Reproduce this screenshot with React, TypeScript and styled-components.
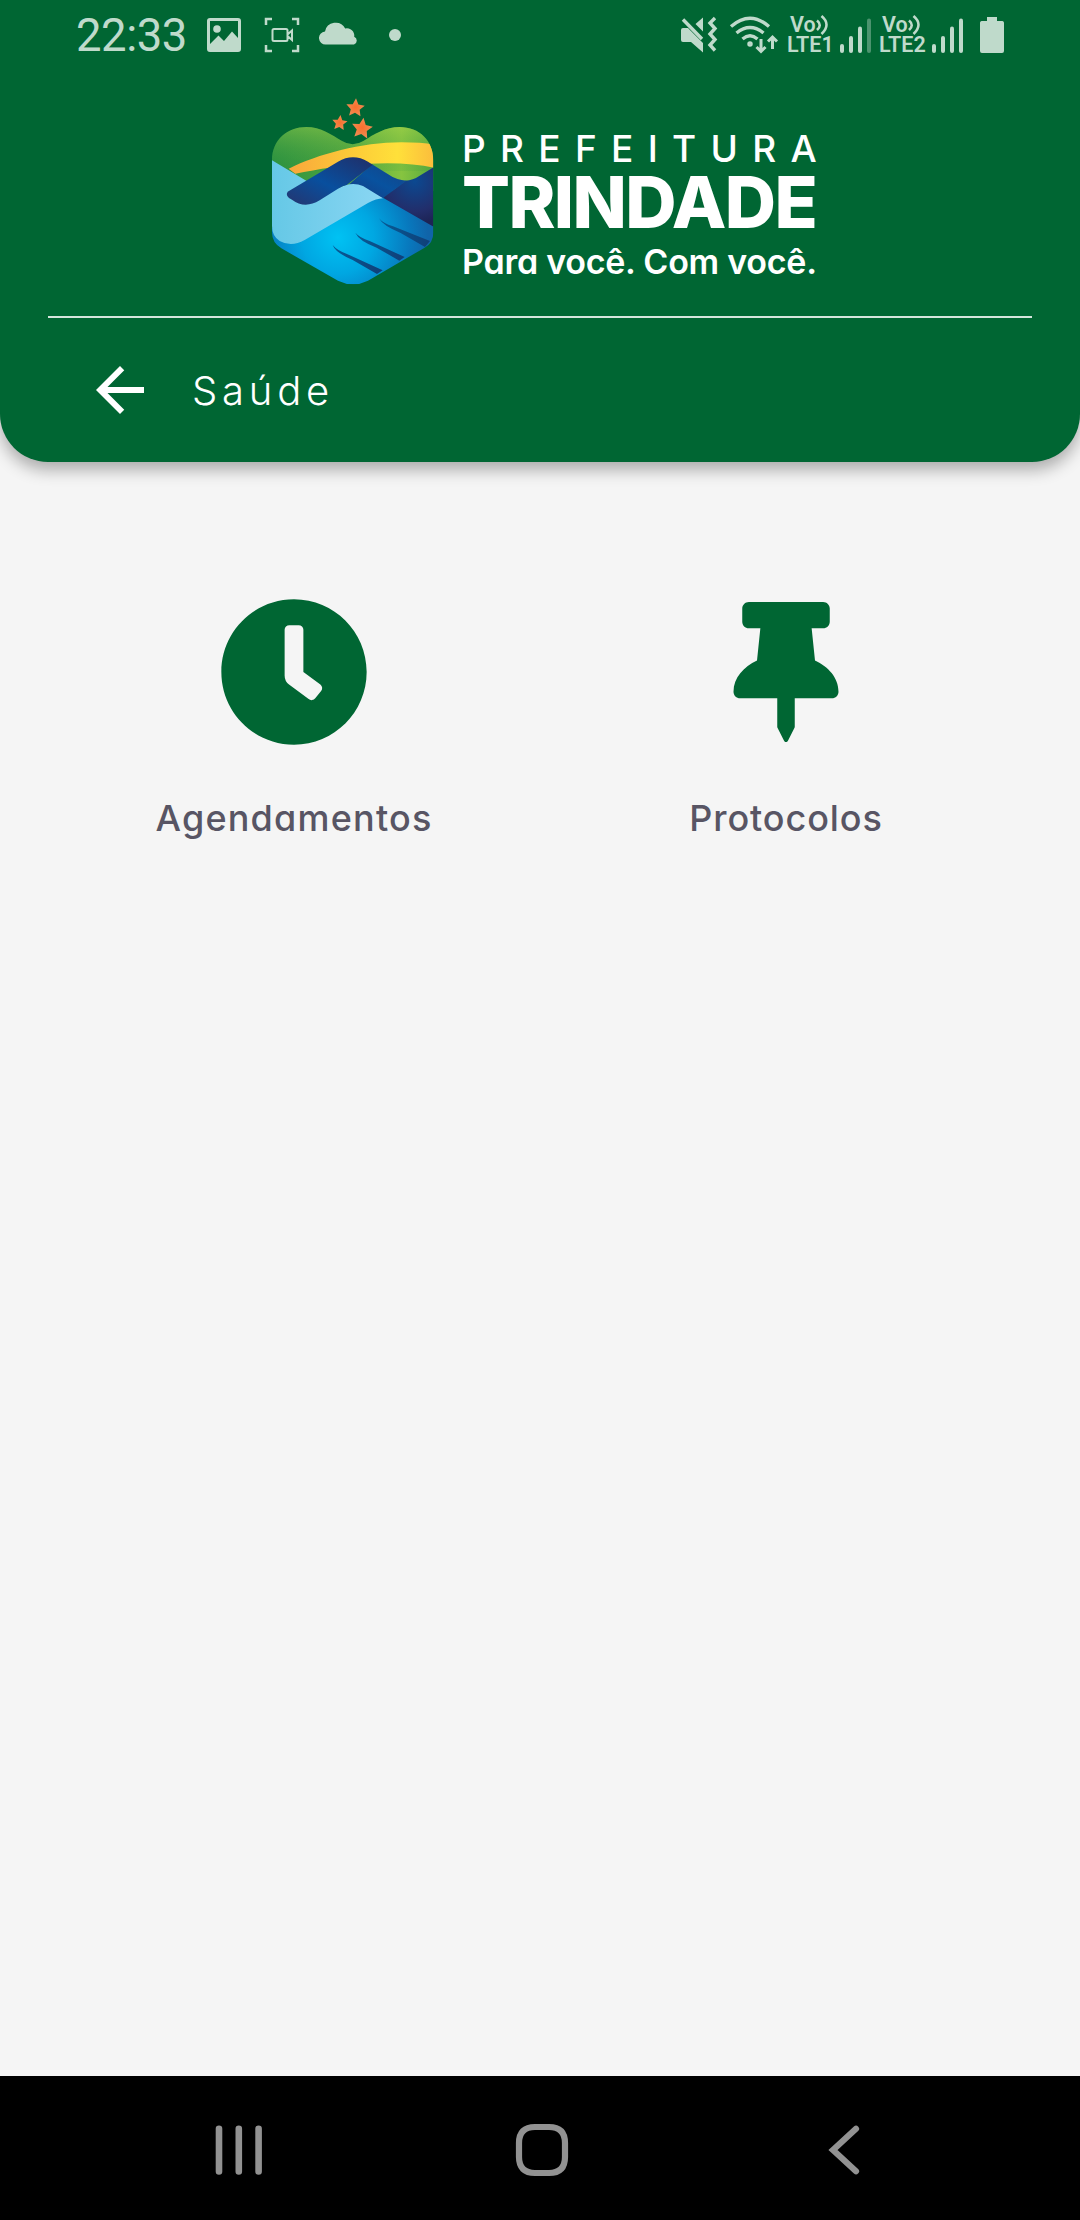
import styled, { createGlobalStyle } from "styled-components";
import { FaClock, FaThumbtack } from "react-icons/fa";
import { MdArrowBack } from "react-icons/md";

function App() {
    return (
        <>
            <GlobalStyle />
            <Screen>
                <Header>
                    <StatusBar />

                    <Brand>
                        <Emblem />
                        <BrandText>
                            <BrandTop>PREFEITURA</BrandTop>
                            <BrandName>TRINDADE</BrandName>
                            <BrandSlogan>Para você. Com você.</BrandSlogan>
                        </BrandText>
                    </Brand>

                    <Divider />

                    <TitleRow>
                        <MdArrowBack size={72} />
                        <Title>Saúde</Title>
                    </TitleRow>
                </Header>

                <Menu>
                    <MenuItem>
                        <IconBox>
                            <FaClock size={150} />
                        </IconBox>
                        <MenuLabel $spacing="1.2px">Agendamentos</MenuLabel>
                    </MenuItem>
                    <MenuItem>
                        <IconBox>
                            <FaThumbtack size={140} />
                        </IconBox>
                        <MenuLabel $spacing="0.9px">Protocolos</MenuLabel>
                    </MenuItem>
                </Menu>

                <NavBar>
                    <svg width="48" height="52" viewBox="0 0 48 52" stroke="#929292" strokeWidth="6.6" strokeLinecap="round">
                        <path d="M4 4.8v42.6M23.8 4.8v42.6M43.6 4.8v42.6" />
                    </svg>
                    <svg width="54" height="54" viewBox="0 0 54 54" fill="none" stroke="#929292" strokeWidth="6.2">
                        <path d="M20 4h14Q50 4 50 20v14Q50 50 34 50H20Q4 50 4 34V20Q4 4 20 4z" />
                    </svg>
                    <svg width="48" height="52" viewBox="0 0 48 52" fill="none" stroke="#929292" strokeWidth="6.2" strokeLinecap="round">
                        <path d="M36 4.8L13 26l23 21.2" />
                    </svg>
                </NavBar>
            </Screen>
        </>
    );
}

export default App;

function StatusBar() {
    return (
        <Style_Status>
            <Clock>22:33</Clock>

            {/* gallery */}
            <StatusIcon $left={21} width="36" height="36" viewBox="0 0 36 36">
                <path
                    fillRule="evenodd"
                    d="M4 1h28a3 3 0 0 1 3 3v28a3 3 0 0 1-3 3H4a3 3 0 0 1-3-3V4a3 3 0 0 1 3-3zM4 4v23l8.500-8.500 5.500 5.500 8-9.500L32 21V4z"
                />
                <circle cx="11" cy="12" r="3.800" />
            </StatusIcon>

            {/* screen recorder */}
            <StatusIcon $left={22} width="36" height="36" viewBox="0 0 36 36" $line>
                <path strokeWidth="2.500" d="M2 8V2h6M28 2h6v6M34 28v6h-6M8 34H2v-6" />
                <path strokeWidth="2" d="M10 12h12a1.500 1.500 0 0 1 1.500 1.500v9A1.500 1.500 0 0 1 22 24H10a1.500 1.500 0 0 1-1.500-1.500v-9A1.500 1.500 0 0 1 10 12zM23.500 17.500l4.500-4v9.500l-4.500-4" />
            </StatusIcon>

            <StatusIcon $left={19} width="40" height="36" viewBox="0 0 40 36">
                <path d="M7 27.500a6.500 6.500 0 0 1-1-13A10.800 10.800 0 0 1 26.200 11.500a7.300 7.300 0 0 1 9 8.200A4.200 4.200 0 0 1 35 27.500z" />
            </StatusIcon>

            <StatusIcon $left={30} width="12" height="36" viewBox="0 0 12 36">
                <circle cx="6" cy="18" r="6" />
            </StatusIcon>

            <Spacer />

            {/* muted + vibrate */}
            <StatusIcon width="38" height="38" viewBox="0 0 38 38">
                <path d="M3 12h5L23 27v9.500L11 26H3a2 2 0 0 1-2-2V14a2 2 0 0 1 2-2zM15.500 8L23 1.500v14z" />
                <path fill="none" stroke="#bfdacb" strokeWidth="3.400" d="M3 3.500L22 23M35 2l-5 5 5 5.500-5 5.500 5 5.500-5 5.500 5 5.500" />
            </StatusIcon>

            <StatusIcon $left={11} width="50" height="38" viewBox="0 0 50 38" $line>
                <path strokeWidth="3.400" d="M2 10.500Q21-6 40 10.500M7.500 17Q21 6 34.500 17M13.500 23Q21 16.500 28.500 23" />
                <circle cx="21" cy="28" r="1.500" strokeWidth="2.500" />
                <path strokeWidth="3" d="M32 23v12M27.500 31l4.500 4.500 4.500-4.500M43.500 33V22M39 25.500l4.500-4.500 4.500 4.500" />
            </StatusIcon>

            <SimCard label="LTE1" bars={3} left={8} />
            <SimCard label="LTE2" bars={4} left={6} />

            <StatusIcon $left={14} width="26" height="38" viewBox="0 0 26 38">
                <path d="M8 1h10v4h5.500A1.800 1.800 0 0 1 25 7v28a2 2 0 0 1-2 2H3a2 2 0 0 1-2-2V7a1.800 1.800 0 0 1 1.500-2H8z" />
            </StatusIcon>
        </Style_Status>
    );
}

function SimCard({ label, bars, left }: { label: string; bars: number; left: number }) {
    return (
        <Sim $left={left}>
            <Volte>
                <VolteTop>
                    Vo
                    <StatusIcon width="13" height="20" viewBox="0 0 13 20" $line>
                        <path strokeWidth="2.600" d="M1 5.500q5.500 4.500 0 9.500M5.500 1q10 8.500 0 18" />
                    </StatusIcon>
                </VolteTop>
                <span>{label}</span>
            </Volte>
            <StatusIcon $left={8} width="34" height="38" viewBox="0 0 34 38" $line>
                {[30, 22, 12.5, 4.5].map((top, i) => (
                    <path
                        key={top}
                        strokeWidth="4"
                        strokeLinecap="round"
                        opacity={i < bars ? 1 : 0.4}
                        d={`M${3 + i * 9} ${top}V35`}
                    />
                ))}
            </StatusIcon>
        </Sim>
    );
}

const STAR = "M0-1L.29-.38.95-.31.46.15.59.81 0 .49-.59.81-.46.15-.95-.31-.29-.38z";

function Emblem() {
    return (
        <svg width="162" height="187" viewBox="52 41 486 561">
            <defs>
                <clipPath id="heart">
                    <path d="M52 228C52 165 100 128 155 128C198 128 232 152 262 170Q294 190 326 170C360 149 392 128 435 128C495 128 536 170 536 228V445Q536 475 510 490L340 589Q295 611 250 589L80 492Q52 474 52 445Z" />
                </clipPath>
                <linearGradient id="hill">
                    <stop offset="0" stopColor="#2b9240" />
                    <stop offset=".45" stopColor="#4fa53f" />
                    <stop offset=".8" stopColor="#86c440" />
                    <stop offset="1" stopColor="#57aa3e" />
                </linearGradient>
                <linearGradient id="hillShade" x1="0" y1="0" x2="0" y2="1">
                    <stop offset="0" stopColor="#b4dc4e" stopOpacity=".4" />
                    <stop offset="1" stopColor="#1f8a3c" stopOpacity=".1" />
                </linearGradient>
                <linearGradient id="road">
                    <stop offset="0" stopColor="#f9a63c" />
                    <stop offset=".4" stopColor="#fcc838" />
                    <stop offset=".75" stopColor="#ffe03a" />
                    <stop offset="1" stopColor="#fbbd3c" />
                </linearGradient>
                <linearGradient id="sleeve">
                    <stop offset="0" stopColor="#65c8e6" />
                    <stop offset="1" stopColor="#8ad6f3" />
                </linearGradient>
                <linearGradient id="thumb" x1="0" y1="1" x2="1" y2="0">
                    <stop offset="0" stopColor="#25356f" />
                    <stop offset=".45" stopColor="#084f9e" />
                    <stop offset="1" stopColor="#212e68" />
                </linearGradient>
                <linearGradient id="palm" x1="0" y1="1" x2="1" y2="0">
                    <stop offset="0" stopColor="#173a80" />
                    <stop offset=".5" stopColor="#08529f" />
                    <stop offset="1" stopColor="#164284" />
                </linearGradient>
                <radialGradient id="wrist" cx="480" cy="290" r="130" gradientUnits="userSpaceOnUse">
                    <stop offset="0" stopColor="#0b4991" />
                    <stop offset=".7" stopColor="#222e6b" />
                    <stop offset="1" stopColor="#1d2354" />
                </radialGradient>
                <radialGradient id="hand" cx="250" cy="460" r="270" gradientUnits="userSpaceOnUse">
                    <stop offset="0" stopColor="#00c2f3" />
                    <stop offset=".4" stopColor="#00a7e2" />
                    <stop offset=".8" stopColor="#0878bd" />
                    <stop offset="1" stopColor="#1064a9" />
                </radialGradient>
                <linearGradient id="finger">
                    <stop offset="0" stopColor="#065b96" />
                    <stop offset="1" stopColor="#103f78" />
                </linearGradient>
                <radialGradient id="star">
                    <stop offset="0" stopColor="#fb6f2d" />
                    <stop offset="1" stopColor="#ee8c52" />
                </radialGradient>
            </defs>

            <g clipPath="url(#heart)">
                <path fill="url(#hill)" d="M52 120h486v200H52z" />
                <path fill="url(#hillShade)" d="M52 120h486v140H52z" />
                <path fill="url(#road)" d="M102 253C190 210 320 174 440 174Q500 174 538 181V250Q460 232 340 238C270 240 190 255 122 268Z" />
                <path fill="url(#hand)" d="M52 430L380 335L538 425V602H52z" />
                <path fill="url(#wrist)" d="M385 340L452 289Q475 288 495 274L538 248V428Z" />
                <path fill="url(#palm)" d="M278 305L352 240L398 268Q425 287 456 289L385 341Z" />
                <path fill="url(#sleeve)" d="M52 228L156 290L250 312Q290 290 325 305L385 342Q365 343 340 356L150 467Q110 490 75 470Q52 455 52 425Z" />
                <path fill="url(#thumb)" d="M99 322L250 232Q295 206 340 232L354 241L276 302Q265 304 250 313L195 348Q150 375 112 346Q90 335 99 322Z" />
                <g fill="url(#finger)">
                    <path d="M373 402Q385 417 415 426L526 470L511 488L438 446Q384 424 373 402Z" />
                    <path d="M302 445Q315 460 345 470L450 518L434 529L366 490Q312 469 302 445Z" />
                    <path d="M234 482Q247 498 275 508L384 558L367 569L294 527Q242 505 234 482Z" />
                </g>
            </g>

            <g fill="url(#star)">
                <path transform="translate(302 71) rotate(4) scale(29)" d={STAR} />
                <path transform="translate(255 116) rotate(6) scale(24)" d={STAR} />
                <path transform="translate(322 133) rotate(8) scale(33)" d={STAR} />
            </g>
        </svg>
    );
}

const GlobalStyle = createGlobalStyle`
    * {
        box-sizing: border-box;
    }

    body {
        margin: 0;
        background: #f5f5f5;
    }

    p, h1 {
        margin: 0;
    }

    svg {
        display: block;
        flex: none;
    }
`;

const Screen = styled.div`
    display: flex;
    flex-direction: column;
    width: 1080px;
    height: 2220px;
    font-family: "Inter", "Open Sans", sans-serif;
    background: #f5f5f5;
    overflow: hidden;
`;

const Header = styled.header`
    height: 462px;
    border-radius: 0 0 48px 48px;
    background: #006633;
    color: #fff;
    box-shadow: 0 8px 16px rgba(0, 0, 0, 0.3);
`;

const Style_Status = styled.div`
    display: flex;
    align-items: center;
    height: 70px;
    padding: 0 75px 0 76px;
    font-family: "Roboto", sans-serif;
    color: #bfdacb;
`;

const Clock = styled.span`
    width: 109px;
    font-size: 45.5px;
    line-height: 70px;
    letter-spacing: -0.5px;
    padding-top: 2px;
`;

const StatusIcon = styled.svg<{ $left?: number; $line?: boolean }>`
    margin-left: ${({ $left }) => $left ?? 0}px;
    fill: ${({ $line }) => ($line ? "none" : "#bfdacb")};
    stroke: ${({ $line }) => ($line ? "#bfdacb" : "none")};
`;

const Spacer = styled.div`
    flex: 1;
`;

const Sim = styled.div<{ $left: number }>`
    display: flex;
    align-items: center;
    margin-left: ${({ $left }) => $left}px;
`;

const Volte = styled.div`
    display: flex;
    flex-direction: column;
    width: 44px;
    font-size: 21.5px;
    font-weight: 600;
    line-height: 20px;
`;

const VolteTop = styled.div`
    display: flex;
    align-items: center;
    padding-left: 3px;
`;

const Brand = styled.div`
    display: flex;
    height: 246px;
    padding: 28px 0 0 272px;
`;

const BrandText = styled.div`
    display: flex;
    flex-direction: column;
    padding: 31px 0 0 28px;
    white-space: nowrap;
`;

const BrandTop = styled.p`
    font-size: 37px;
    font-weight: 500;
    line-height: 40px;
    letter-spacing: 14.3px;
`;

const BrandName = styled.p`
    font-size: 71px;
    font-weight: 800;
    line-height: 66px;
    letter-spacing: -1.6px;
`;

const BrandSlogan = styled.p`
    font-size: 34px;
    font-weight: 600;
    line-height: 54px;
    letter-spacing: -0.25px;
    font-feature-settings: "cv11";
`;

const Divider = styled.div`
    height: 2px;
    margin: 0 48px;
    background: #d4e5dc;
`;

const TitleRow = styled.div`
    display: flex;
    align-items: center;
    height: 144px;
    padding-left: 84px;
`;

const Title = styled.h1`
    margin-left: 36px;
    font-size: 40px;
    font-weight: 300;
    letter-spacing: 4.8px;
`;

const Menu = styled.main`
    flex: 1;
    display: grid;
    grid-template-columns: 1fr 1fr;
    align-content: start;
    padding: 135px 48px 0;
`;

const MenuItem = styled.div`
    display: flex;
    flex-direction: column;
    align-items: center;
    gap: 44px;
`;

const IconBox = styled.div`
    display: flex;
    align-items: center;
    height: 150px;
    color: #006633;
`;

const MenuLabel = styled.p<{ $spacing: string }>`
    font-size: 36px;
    font-weight: 500;
    line-height: 54px;
    letter-spacing: ${({ $spacing }) => $spacing};
    font-feature-settings: "cv11";
    color: #585564;
`;

const NavBar = styled.nav`
    display: flex;
    align-items: center;
    justify-content: space-between;
    height: 144px;
    padding: 4px 212px 0 215px;
    background: #000;
`;
